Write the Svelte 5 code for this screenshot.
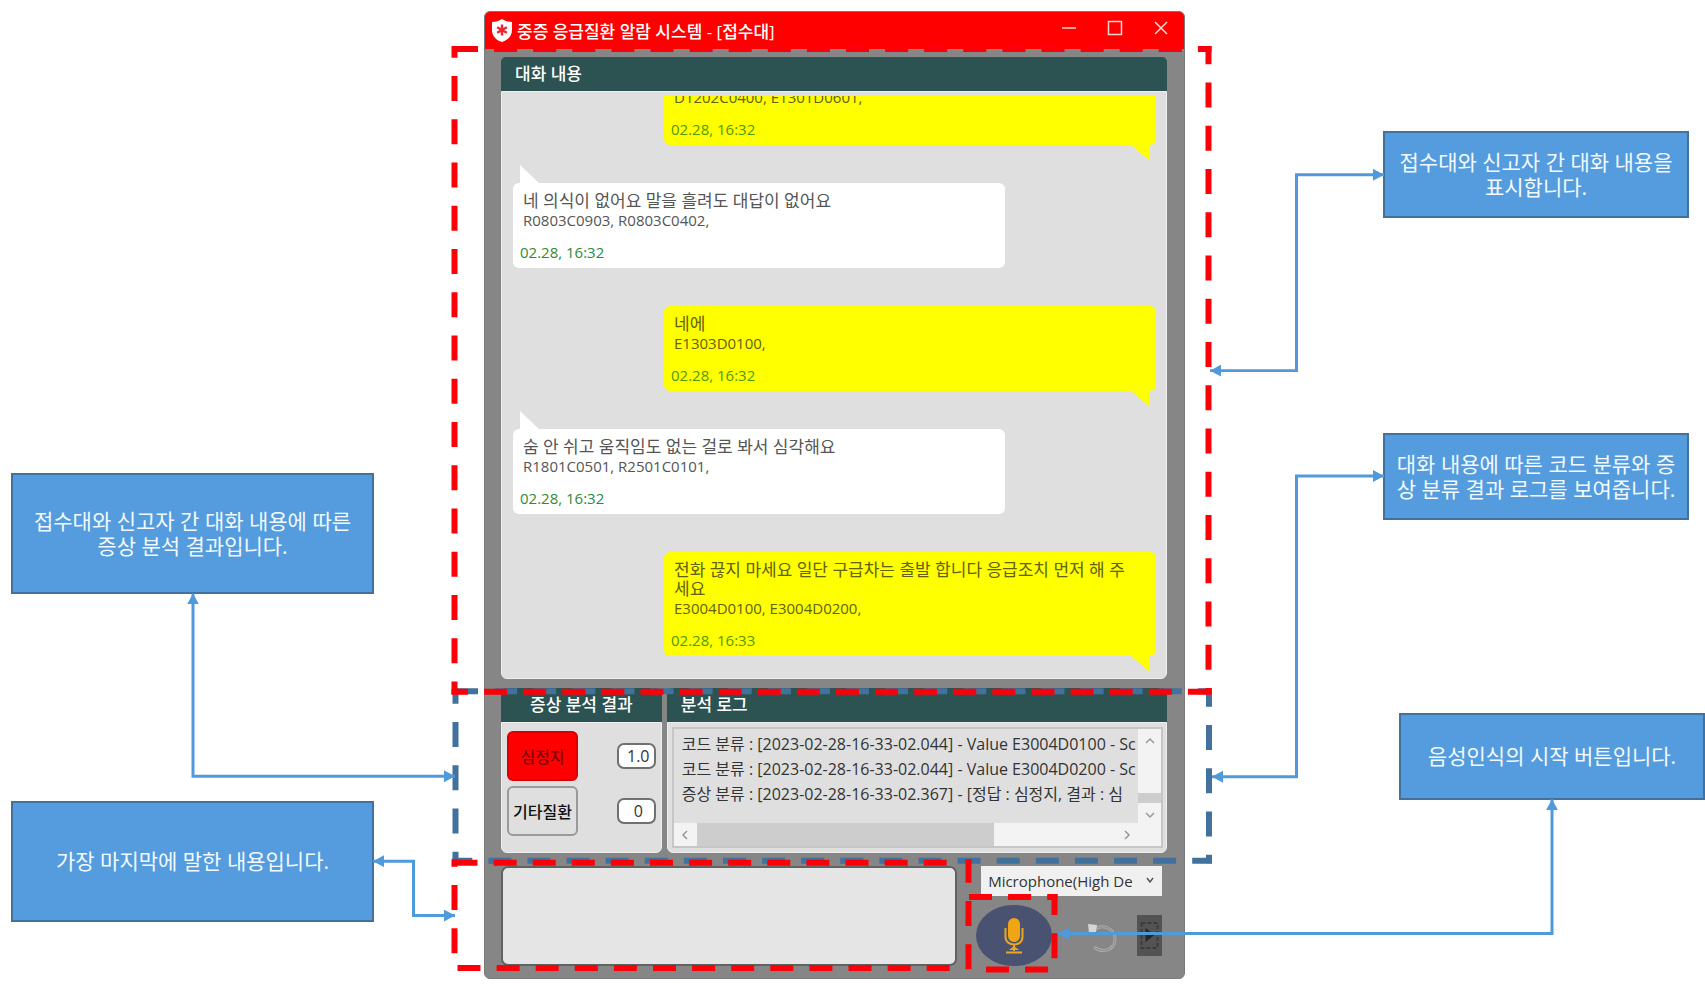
<script lang="ts">
	const messages = [
		{ mine: true, text: "", codes: "D1202C0400, E1301D0601,", time: "02.28, 16:32" },
		{ mine: false, text: "네 의식이 없어요 말을 흘려도 대답이 없어요", codes: "R0803C0903, R0803C0402,", time: "02.28, 16:32" },
		{ mine: true, text: "네에", codes: "E1303D0100,", time: "02.28, 16:32" },
		{ mine: false, text: "숨 안 쉬고 움직임도 없는 걸로 봐서 심각해요", codes: "R1801C0501, R2501C0101,", time: "02.28, 16:32" },
		{
			mine: true,
			text: "전화 끊지 마세요 일단 구급차는 출발 합니다 응급조치 먼저 해 주\n세요",
			codes: "E3004D0100, E3004D0200,",
			time: "02.28, 16:33",
		},
	];

	const results = [
		{ id: "arrest", name: "심정지", value: "1.0", active: true },
		{ id: "other", name: "기타질환", value: "0", active: false },
	];

	const logs = [
		"코드 분류 : [2023-02-28-16-33-02.044] - Value E3004D0100 - Sc",
		"코드 분류 : [2023-02-28-16-33-02.044] - Value E3004D0200 - Sc",
		"증상 분류 : [2023-02-28-16-33-02.367] - [정답 : 심정지, 결과 : 심",
	];

	const leftNotes = [
		{ id: "result", text: "접수대와 신고자 간 대화 내용에 따른\n증상 분석 결과입니다." },
		{ id: "last", text: "가장 마지막에 말한 내용입니다." },
	];
	const rightNotes = [
		{ id: "talk", text: "접수대와 신고자 간 대화 내용을\n표시합니다." },
		{ id: "log", text: "대화 내용에 따른 코드 분류와 증\n상 분류 결과 로그를 보여줍니다." },
		{ id: "start", text: "음성인식의 시작 버튼입니다." },
	];

	// dashed outlines, one path per side: d, dash pattern, dash offset
	const H = "23 16.1";
	const V = "25 18.3";
	const blueSides = [
		{ d: "M455 692H1212", dash: H, offset: 0 },
		{ d: "M455.5 689V864", dash: V, offset: 9.6 },
		{ d: "M1209 689V864", dash: V, offset: 6.6 },
		{ d: "M452.5 861.5H1212", dash: H, offset: 3.2 },
	];
	const redSides = [
		{ d: "M455 49H1211.5", dash: H, offset: 0 },
		{ d: "M454.5 46V695", dash: V, offset: 13.3 },
		{ d: "M1208.5 46V695", dash: V, offset: 6.8 },
		{ d: "M451.5 692.5H1211.5", dash: H, offset: 6.5 },
		{ d: "M454.5 863.5H950", dash: H, offset: 0 },
		{ d: "M454.5 860V966", dash: V, offset: 17.3 },
		{ d: "M457.5 969H951", dash: H, offset: 0 },
		{ d: "M968.5 860V971", dash: V, offset: 1.3 },
		{ d: "M969 898H1057.5", dash: H, offset: 0 },
		{ d: "M1054.5 895V974", dash: V, offset: 4 },
		{ d: "M986 970.5H1049", dash: H, offset: 0 },
	];

	const arrows = [
		"M1384 175H1296.5V371H1210",
		"M1384 476.5H1296.5V777.5H1212",
		"M1552 800V934.5H1058",
		"M193 594V777H455",
		"M373 862H413.5V916.5H455",
	];

	let device = $state("high");
	let lastText = $state("");
</script>

<div class="board">
	<aside class="notes notes--left">
		{#each leftNotes as note (note.id)}
			<p class="note note--{note.id}">{note.text}</p>
		{/each}
	</aside>

	<main class="window">
		<header class="titlebar">
			<svg class="shield" viewBox="0 0 20 23" aria-hidden="true">
				<path d="M10 0C7 2 4 3 0 3V11C0 17 4 21 10 23C16 21 20 17 20 11V3C16 3 13 2 10 0Z" fill="#fff" />
				<path d="M10 5.500V16.500M5.200 8.200L14.800 13.800M14.800 8.200L5.200 13.800" stroke="#e23" stroke-width="2.400" />
			</svg>
			<h1>중증 응급질환 알람 시스템 - [접수대]</h1>
			<button class="winbtn" aria-label="최소화">
				<svg viewBox="0 0 16 16"><path d="M1 8H15" /></svg>
			</button>
			<button class="winbtn" aria-label="최대화">
				<svg viewBox="0 0 16 16"><path d="M1.500 1.500H14.500V14.500H1.500Z" /></svg>
			</button>
			<button class="winbtn" aria-label="닫기">
				<svg viewBox="0 0 16 16"><path d="M2 2L14 14M14 2L2 14" /></svg>
			</button>
		</header>

		<div class="content">
			<section class="panel">
				<h2>대화 내용</h2>
				<div class="panel__body chat">
					<div class="chat__view">
						{#each messages as message, i (i)}
							<article class="bubble" class:bubble--mine={message.mine}>
								{#if message.text}
									<p class="bubble__text">{message.text}</p>
								{/if}
								<p class="bubble__codes">{message.codes}</p>
								<time>{message.time}</time>
							</article>
						{/each}
					</div>
				</div>
			</section>

			<div class="analysis">
				<section class="panel panel--results">
					<h2>증상 분석 결과</h2>
					<div class="panel__body results">
						{#each results as result (result.id)}
							<div class="result">
								<button class="result__name" class:active={result.active} id={result.id}>{result.name}</button>
								<input class="result__value" type="text" readonly aria-labelledby={result.id} value={result.value} />
							</div>
						{/each}
					</div>
				</section>

				<section class="panel panel--log">
					<h2>분석 로그</h2>
					<div class="panel__body log">
						<div class="log__box">
							<ul>
								{#each logs as log, i (i)}
									<li>{log}</li>
								{/each}
							</ul>
							<div class="vbar">
								<button aria-label="위로"><svg viewBox="0 0 12 12"><path d="M2 8L6 4L10 8" /></svg></button>
								<span class="vbar__thumb"></span>
								<button aria-label="아래로"><svg viewBox="0 0 12 12"><path d="M2 4L6 8L10 4" /></svg></button>
							</div>
							<div class="hbar">
								<button aria-label="왼쪽"><svg viewBox="0 0 12 12"><path d="M8 2L4 6L8 10" /></svg></button>
								<span class="hbar__thumb"></span>
								<button aria-label="오른쪽"><svg viewBox="0 0 12 12"><path d="M4 2L8 6L4 10" /></svg></button>
							</div>
						</div>
					</div>
				</section>
			</div>

			<footer class="bottom">
				<textarea aria-label="마지막 대화" bind:value={lastText}></textarea>
				<div class="controls">
					<div class="device">
						<select aria-label="마이크" bind:value={device}>
							<option value="high">Microphone(High De</option>
						</select>
						<svg viewBox="0 0 12 12" aria-hidden="true"><path d="M3 4L6 8L9 4" /></svg>
					</div>
					<div class="actions">
						<button class="mic" aria-label="음성인식 시작">
							<svg viewBox="0 0 20 38">
								<rect x="4" y="1" width="12" height="24" rx="6" fill="#f0a514" />
								<path d="M1.500 11V20C1.500 30 18.500 30 18.500 20V11M10 27V34M2 35.500H18" fill="none" stroke="#eba523" stroke-width="2" />
								<path d="M5 33L10 29L15 33Z" fill="#eba523" />
							</svg>
						</button>
						<button class="undo" aria-label="되돌리기">
							<svg viewBox="0 0 32 32">
								<path d="M6 9C15 0 29 7 28 18C27 28 16 32 7 25" fill="none" stroke="#acacac" stroke-width="3" />
								<path d="M6 9C15 0 29 7 28 18C27 28 16 32 7 25" fill="none" stroke="#868686" stroke-width="1" />
								<path d="M1 2L10 3L9 10L2 11Z" fill="#d6d6d6" />
							</svg>
						</button>
						<button class="play" aria-label="재생">
							<svg viewBox="0 0 24 41">
								<rect x="4" y="8" width="16" height="25" fill="none" stroke="#3c3c3c" stroke-width="2" stroke-dasharray="4 2" />
								<path d="M8 13L17 20L8 27Z" fill="#262626" />
							</svg>
						</button>
					</div>
				</div>
			</footer>
		</div>
	</main>

	<aside class="notes notes--right">
		{#each rightNotes as note (note.id)}
			<p class="note note--{note.id}">{note.text}</p>
		{/each}
	</aside>

	<svg class="overlay" viewBox="0 0 1705 991" preserveAspectRatio="none" aria-hidden="true">
		<defs>
			<marker id="head" viewBox="0 0 11 12" refX="11" refY="6" markerWidth="11" markerHeight="12" markerUnits="userSpaceOnUse" orient="auto-start-reverse">
				<path d="M0 0L11 6L0 12Z" fill="#5099db" />
			</marker>
		</defs>
		<g class="dash dash--blue">
			{#each blueSides as side (side.d)}
				<path d={side.d} stroke-dasharray={side.dash} stroke-dashoffset={side.offset} />
			{/each}
		</g>
		<g class="dash dash--red">
			{#each redSides as side (side.d)}
				<path d={side.d} stroke-dasharray={side.dash} stroke-dashoffset={side.offset} />
			{/each}
		</g>
		{#each arrows as d (d)}
			<path class="arrow" {d} marker-start="url(#head)" marker-end="url(#head)" />
		{/each}
	</svg>
</div>

<style>
	:global(body) {
		margin: 0;
		background: #fff;
	}

	.board {
		position: relative;
		display: grid;
		grid-template-columns: 484fr 701fr 520fr;
		align-items: start;
		padding-block: 11px;
		font-family: "Open Sans", "Noto Sans CJK KR", sans-serif;
		font-size: 16px;
		color: #333;
	}
	.board *,
	.board {
		box-sizing: border-box;
	}

	h1,
	h2,
	p,
	ul {
		margin: 0;
		padding: 0;
	}
	button,
	input,
	select,
	textarea {
		font: inherit;
		color: inherit;
		margin: 0;
		padding: 0;
		border: 0;
	}
	button {
		background: none;
	}

	.overlay {
		position: absolute;
		inset: 0;
		width: 100%;
		height: 100%;
		pointer-events: none;
	}
	.dash {
		fill: none;
		stroke-width: 6;
	}
	.dash--red {
		stroke: #fa0008;
	}
	.dash--blue {
		stroke: #41719c;
	}
	.arrow {
		fill: none;
		stroke: #5099db;
		stroke-width: 3;
	}

	/* notes beside the window */
	.notes {
		display: flex;
		flex-direction: column;
	}
	.notes--left {
		padding: 462px 110px 0 11px;
		gap: 207px;
	}
	.notes--right {
		padding: 120px 16px 0 198px;
	}
	.note {
		display: flex;
		align-items: center;
		justify-content: center;
		min-height: 87px;
		border: 2px solid #41719c;
		background: #549cdd;
		color: #f2faff;
		font-size: 21px;
		line-height: 25px;
		text-align: center;
		white-space: pre-line;
	}
	.notes--left .note {
		min-height: 121px;
	}
	.note--log {
		margin-top: 215px;
	}
	.note--start {
		margin: 193px -16px 0 16px;
	}

	/* window */
	.window {
		border: 1px solid #7a7a7a;
		border-radius: 6px;
		background: #868686;
		overflow: hidden;
	}
	.titlebar {
		display: flex;
		align-items: center;
		height: 37px;
		padding: 0 15px 0 7px;
		background: #fe0000;
		color: #fff;
	}
	.shield {
		width: 20px;
		height: 23px;
		margin-right: 5px;
	}
	h1 {
		flex: 1;
		font-size: 17px;
		font-weight: 500;
	}
	.winbtn {
		width: 16px;
		height: 16px;
		margin: 0 0 6px 30px;
	}
	.winbtn svg {
		display: block;
		fill: none;
		stroke: #ffd5d5;
		stroke-width: 1.500;
	}

	.content {
		display: flex;
		flex-direction: column;
		padding: 8px 17px 12px 16px;
	}

	h2 {
		height: 34px;
		padding-left: 14px;
		border-radius: 5px 5px 0 0;
		background: #2c5351;
		color: #fff;
		font-size: 17px;
		font-weight: 500;
		line-height: 34px;
	}
	.panel__body {
		border: 1px solid #eee;
		border-radius: 0 0 6px 6px;
		background: #dfdfdf;
	}

	.chat {
		height: 588px;
		padding: 4px 10px 0 11px;
	}
	.chat__view {
		display: flex;
		flex-direction: column;
		justify-content: flex-end;
		gap: 38px;
		height: 582px;
		padding-bottom: 22px;
		overflow: hidden;
	}
	.bubble {
		position: relative;
		flex: none;
		width: calc(100% - 151px);
		padding: 8px 6px 6px 7px;
		border-radius: 6px;
		background: #fff;
		color: #555;
		line-height: 20px;
	}
	.bubble--mine {
		align-self: flex-end;
		background: #ff0;
		color: #62620a;
	}
	.bubble::before {
		content: "";
		position: absolute;
		top: -18px;
		left: 7px;
		width: 20px;
		height: 19px;
		background: inherit;
		clip-path: polygon(0 0, 100% 100%, 0 100%);
	}
	.bubble--mine::before {
		top: auto;
		bottom: -16px;
		left: auto;
		right: 6px;
		height: 17px;
		clip-path: polygon(0 0, 100% 0, 100% 100%);
	}
	.bubble__text,
	.bubble__codes {
		padding-left: 3px;
	}
	.bubble__text {
		font-size: 17px;
		line-height: 19px;
		white-space: pre;
	}
	.bubble__codes {
		font-size: 15px;
	}
	time {
		display: block;
		margin-top: 12px;
		color: #2f8a3a;
		font-size: 15px;
	}
	.bubble--mine time {
		color: #4f9a00;
	}

	.analysis {
		display: flex;
		gap: 5px;
		margin-top: 9px;
	}
	.panel--results {
		flex: 161;
		min-width: 0;
	}
	.panel--log {
		flex: 501;
		min-width: 0;
	}
	.panel--results h2 {
		padding: 0;
		text-align: center;
	}
	.results,
	.log {
		height: 131px;
	}
	.results {
		display: flex;
		flex-direction: column;
		gap: 5px;
		padding: 8px 5px;
	}
	.result {
		display: flex;
		align-items: center;
		justify-content: space-between;
	}
	.result__name {
		width: 71px;
		height: 50px;
		border: 2px solid #9a9a9a;
		border-radius: 6px;
		color: #111;
		font-size: 16px;
		font-weight: 500;
		white-space: nowrap;
	}
	.result__name.active {
		border-color: #d80000;
		background: #f00;
		color: #7c0000;
	}
	.result__value {
		width: 39px;
		height: 26px;
		padding-left: 4px;
		border: 2px solid #707070;
		border-radius: 7px;
		background: #fff;
		text-align: center;
	}

	.log {
		padding: 4px 3px 4px 4px;
	}
	.log__box {
		display: grid;
		grid-template-columns: minmax(0, 1fr) 23px;
		grid-template-rows: 94px 23px;
		height: 121px;
		border: 2px solid #c6c6c6;
	}
	ul {
		padding: 3px 0 0 8px;
		overflow: hidden;
		list-style: none;
	}
	li {
		line-height: 25px;
		white-space: nowrap;
	}
	.vbar {
		grid-row: 1 / 3;
		grid-column: 2;
		display: flex;
		flex-direction: column;
		justify-content: space-between;
		padding-bottom: 20px;
		background: #f3f3f3;
	}
	.vbar button,
	.hbar button {
		display: grid;
		place-items: center;
		width: 23px;
		height: 23px;
	}
	.vbar svg,
	.hbar svg,
	.device svg {
		width: 12px;
		height: 12px;
		fill: none;
		stroke: #999;
		stroke-width: 1.500;
	}
	.vbar__thumb {
		height: 10px;
		margin-top: 40px;
		background: #cdcdcd;
	}
	.hbar {
		display: flex;
		justify-content: space-between;
		background: #f3f3f3;
	}
	.hbar__thumb {
		width: 64%;
		margin-right: auto;
		background: #cdcdcd;
	}

	.bottom {
		display: flex;
		gap: 24px;
		margin-top: 13px;
		padding-right: 5px;
	}
	textarea {
		flex: 455;
		min-width: 0;
		height: 100px;
		border: 2px solid #626262;
		border-radius: 7px;
		background: #e5e5e5;
		resize: none;
	}
	.controls {
		flex: 182;
		min-width: 0;
	}
	.device {
		position: relative;
	}
	select {
		display: block;
		width: 100%;
		height: 30px;
		padding: 0 20px 0 7px;
		border-radius: 0;
		background: #f0f0f0;
		font-size: 15px;
		appearance: none;
	}
	.device svg {
		position: absolute;
		top: 8px;
		right: 6px;
		stroke: #555;
	}
	.actions {
		display: flex;
		align-items: center;
		margin-top: 9px;
	}
	.mic {
		display: grid;
		place-items: center;
		width: 76px;
		height: 61px;
		margin-left: -5px;
		border-radius: 38px / 31px;
		background: #4a5272;
	}
	.mic svg {
		width: 20px;
		height: 38px;
	}
	.undo,
	.undo svg {
		display: block;
		width: 32px;
		height: 32px;
	}
	.undo {
		margin: 4px 18px 0 auto;
	}
	.play,
	.play svg {
		display: block;
		width: 25px;
		height: 41px;
	}
	.play {
		background: #535353;
	}
</style>
